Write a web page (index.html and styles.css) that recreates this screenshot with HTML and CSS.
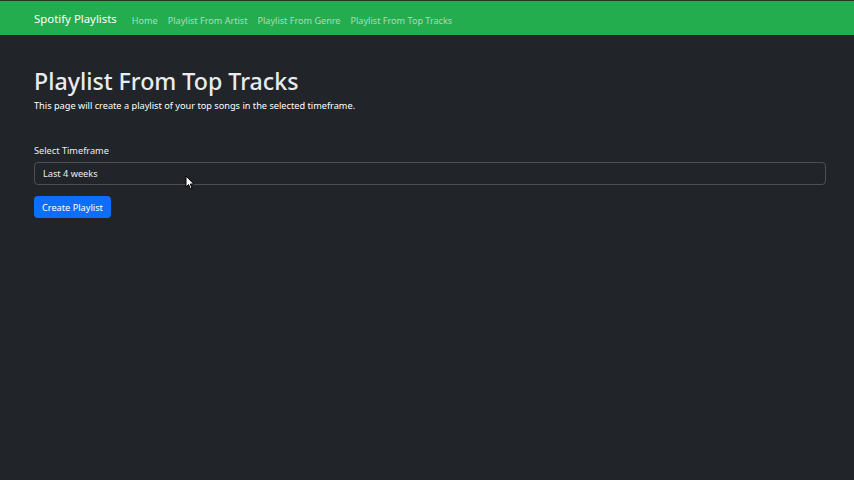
FILE: index.html
```html
<!DOCTYPE html>
<html lang="en">
<head>
  <meta charset="UTF-8">
  <title>Playlist From Top Tracks</title>
  <link rel="stylesheet" href="styles.css">
</head>
<body>
  <nav class="navbar">
    <a class="brand" href="#">Spotify Playlists</a>
    <ul class="nav-links">
      <li><a href="#">Home</a></li>
      <li><a href="#">Playlist From Artist</a></li>
      <li><a href="#">Playlist From Genre</a></li>
      <li><a href="#">Playlist From Top Tracks</a></li>
    </ul>
  </nav>

  <main class="container">
    <h1>Playlist From Top Tracks</h1>
    <p class="lead">This page will create a playlist of your top songs in the selected timeframe.</p>

    <form class="form">
      <label class="form-label" for="timeframe">Select Timeframe</label>
      <div class="select-wrap">
        <div class="form-select" id="timeframe">Last 4 weeks</div>
        <svg class="cursor" width="10" height="15" viewBox="0 0 10 15">
          <path d="M1 1 L1 12 L3.6 9.6 L5.4 13.8 L7 13.1 L5.3 9 L8.8 9 Z" fill="#fff" stroke="#000" stroke-width="1"/>
        </svg>
      </div>
      <button class="btn" type="button">Create Playlist</button>
    </form>
  </main>
</body>
</html>
```

FILE: styles.css
```css
html, body {
  margin: 0;
  padding: 0;
  height: 100%;
  background: #212529;
  color: #dee2e6;
  font-family: "Noto Sans", "Open Sans", sans-serif;
}

.navbar {
  display: flex;
  align-items: center;
  height: 35px;
  padding: 0 34px;
  background: #24ad4f;
  border-top: 1px solid #1c3a2a;
  box-sizing: border-box;
}

.brand {
  color: #fff;
  font-size: 11.4px;
  text-decoration: none;
  margin-right: 15px;
}

.nav-links {
  display: flex;
  gap: 10px;
  list-style: none;
  margin: 0;
  padding: 0;
}

.nav-links a {
  color: rgba(255, 255, 255, 0.6);
  font-size: 9.1px;
  text-decoration: none;
}

.container {
  padding: 30px 28px 0 34px;
}

h1 {
  margin: 0;
  font-size: 23.2px;
  font-weight: 500;
  color: #e9ecef;
  line-height: 32px;
}

.lead {
  margin: 2px 0 0;
  font-size: 9.2px;
  color: #fff;
}

.form {
  margin-top: 32px;
}

.form-label {
  display: block;
  font-size: 9.2px;
  color: #e9ecef;
  margin-bottom: 5px;
}

.select-wrap {
  position: relative;
}

.form-select {
  height: 23px;
  box-sizing: border-box;
  border: 1px solid #495057;
  border-radius: 4px;
  padding: 0 8px;
  font-size: 9.2px;
  line-height: 21px;
  color: #e9ecef;
  background: #212529;
}

.cursor {
  position: absolute;
  left: 151px;
  top: 13px;
}

.btn {
  margin-top: 11px;
  height: 22px;
  padding: 0 8px;
  border: none;
  border-radius: 4px;
  background: #0d6efd;
  color: #fff;
  font-family: inherit;
  font-size: 9.2px;
}
```
